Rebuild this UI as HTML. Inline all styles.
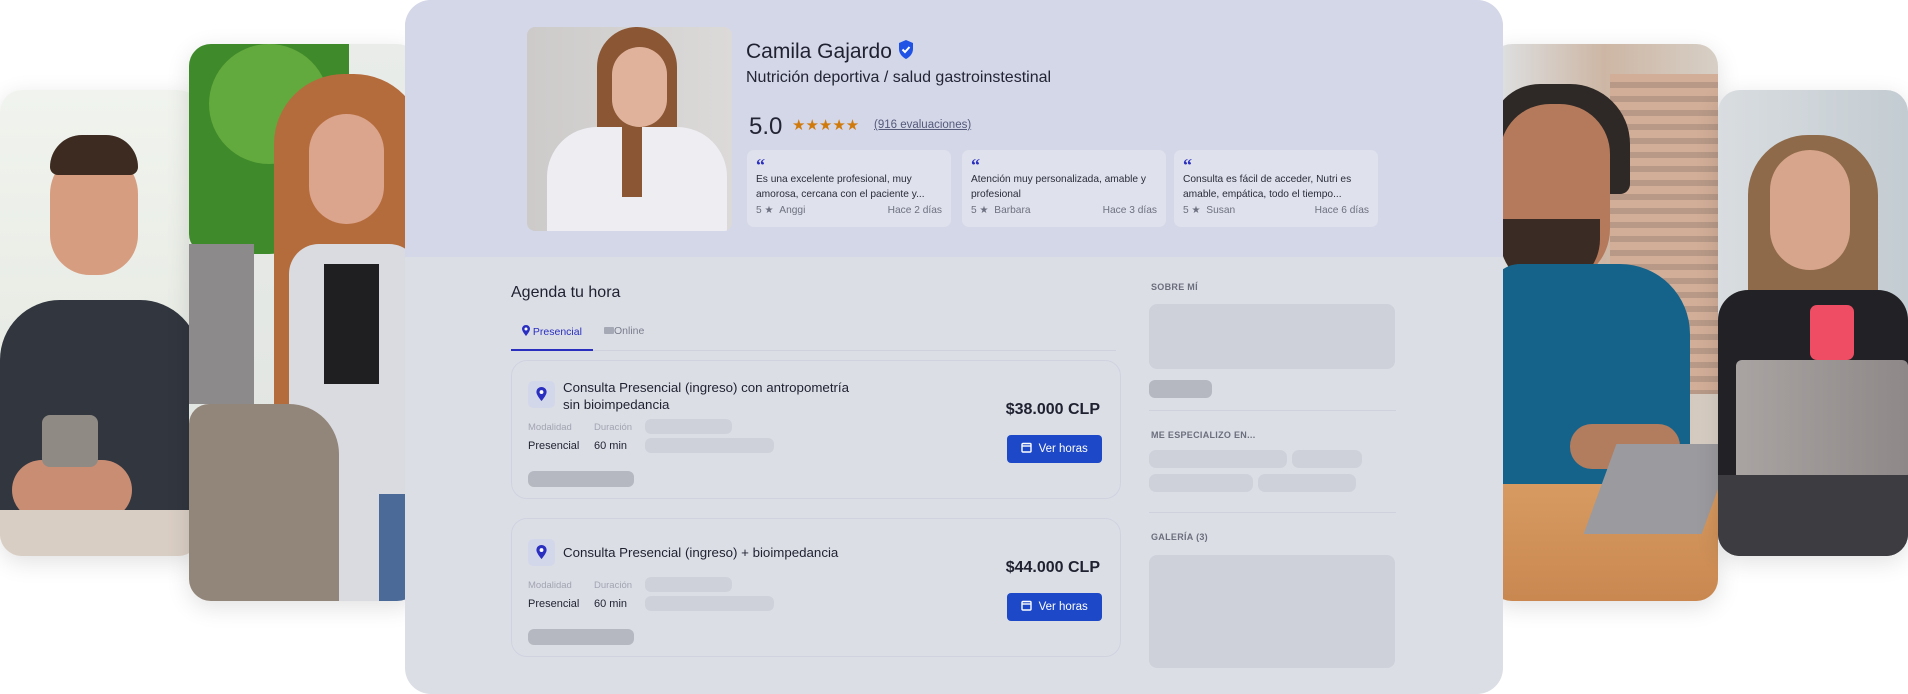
<!DOCTYPE html>
<html><head><meta charset="utf-8"><style>
*{margin:0;padding:0;box-sizing:border-box}
body{width:1908px;height:693px;background:#fff;position:relative;overflow:hidden;font-family:"Liberation Sans",sans-serif;color:#1f2130}
.ph{position:absolute;overflow:hidden;border-radius:22px;box-shadow:0 6px 24px rgba(0,0,0,.12)}
.ph div{position:absolute}
.card{position:absolute;left:405px;top:0;width:1098px;height:694px;background:#dcdee6;border-radius:26px;overflow:hidden}
.hd{position:absolute;left:0;top:0;width:100%;height:257px;background:#d4d7e8}
.a{position:absolute}
.rv{position:absolute;top:150px;width:204px;height:77px;background:#dfe1ec;border-radius:7px;font-size:10.2px;color:#2a2c3a}
.rv .q{position:absolute;left:9px;top:5px;color:#2a2fc0;font-size:18px;font-weight:bold;font-family:"Liberation Serif",serif}
.rv .t{position:absolute;left:9px;top:22px;width:190px;line-height:15px}
.rv .f{position:absolute;left:9px;right:9px;top:55px;color:#6d7080;font-size:10.2px}
.rv .f span{float:right}
.sk{position:absolute;background:#cfd1da;border-radius:6px}
.sk2{position:absolute;background:#b6b8c1;border-radius:6px}
.bx{position:absolute;left:106px;width:610px;height:139px;border:1.5px solid #d0d3df;border-radius:16px}
.ic{position:absolute;left:16px;top:20px;width:27px;height:27px;background:#d3d7ea;border-radius:5px}
.tt{position:absolute;left:51px;font-size:13.3px;line-height:17px;color:#1f2130}
.lb{position:absolute;font-size:9.5px;color:#a2a4b0}
.vl{position:absolute;font-size:11px;color:#1f2130}
.pr{position:absolute;right:20px;font-size:16px;font-weight:bold;color:#1f2130}
.bt{position:absolute;right:18px;width:95px;height:28px;background:#1d48c7;border-radius:4px;color:#fff;font-size:11.5px;line-height:28px;text-align:center}
.sh{position:absolute;font-size:9px;font-weight:bold;color:#6b6e7c;letter-spacing:.3px}
.dv{position:absolute;left:744px;width:247px;height:1px;background:#cfd2dc}
</style></head><body>

<div class="ph" style="left:0;top:90px;width:200px;height:466px;background:linear-gradient(#f1f4ee,#e7ebe4 60%,#d8cdc4)">
 <div style="left:0;top:210px;width:200px;height:220px;background:#31363f;border-radius:60px 60px 0 0"></div>
 <div style="left:50px;top:60px;width:88px;height:125px;background:#d79d80;border-radius:44px 44px 40px 40px"></div>
 <div style="left:50px;top:45px;width:88px;height:40px;background:#3d2b21;border-radius:40px 40px 10px 10px"></div>
 <div style="left:12px;top:370px;width:120px;height:60px;background:#c98d73;border-radius:30px"></div>
 <div style="left:42px;top:325px;width:56px;height:52px;background:#8f8a84;border-radius:8px"></div>
 <div style="left:0;top:420px;width:200px;height:50px;background:#d9cec4"></div>
</div>

<div class="ph" style="left:189px;top:44px;width:230px;height:557px;background:linear-gradient(#e9ece9,#dfe3df)">
 <div style="left:0;top:0;width:160px;height:210px;background:#3f8a2a;border-radius:0 0 80px 20px"></div>
 <div style="left:20px;top:0;width:120px;height:120px;background:#62a93e;border-radius:50%"></div>
 <div style="left:85px;top:30px;width:150px;height:400px;background:#b56c3c;border-radius:70px 70px 30px 30px"></div>
 <div style="left:120px;top:70px;width:75px;height:110px;background:#dba58d;border-radius:38px"></div>
 <div style="left:100px;top:200px;width:130px;height:370px;background:#d9dbe1;border-radius:30px 30px 0 0"></div>
 <div style="left:135px;top:220px;width:55px;height:120px;background:#1f1f22"></div>
 <div style="left:0;top:200px;width:65px;height:160px;background:#8d8a8c"></div>
 <div style="left:0;top:360px;width:150px;height:200px;background:#928579;border-radius:20px 50px 0 0"></div>
 <div style="left:190px;top:450px;width:40px;height:110px;background:#4c6a97"></div>
</div>

<div class="ph" style="left:1490px;top:44px;width:228px;height:557px;background:linear-gradient(90deg,#dfe3e6,#cdb6a4 50%,#d7cfc6)">
 <div style="left:120px;top:30px;width:108px;height:320px;background:repeating-linear-gradient(#d2ae98 0 8px,#b89988 8px 14px)"></div>
 <div style="left:0;top:40px;width:140px;height:110px;background:#2e2926;border-radius:50px 60px 10px 10px"></div>
 <div style="left:10px;top:60px;width:110px;height:180px;background:#b57a5c;border-radius:50px 50px 55px 55px"></div>
 <div style="left:10px;top:175px;width:100px;height:70px;background:#3a2c24;border-radius:0 0 50px 50px"></div>
 <div style="left:0;top:220px;width:200px;height:230px;background:#15638a;border-radius:30px 70px 0 0"></div>
 <div style="left:80px;top:380px;width:110px;height:45px;background:#b27c5e;border-radius:22px"></div>
 <div style="left:0;top:440px;width:228px;height:120px;background:linear-gradient(#d79b61,#c98750)"></div>
 <div style="left:110px;top:400px;width:118px;height:90px;background:#9b9a9e;transform:skewX(-20deg)"></div>
</div>

<div class="ph" style="left:1718px;top:90px;width:190px;height:466px;background:linear-gradient(90deg,#d9dde0,#c3ccd2)">
 <div style="left:30px;top:45px;width:130px;height:200px;background:#8e6a4a;border-radius:60px 60px 20px 20px"></div>
 <div style="left:52px;top:60px;width:80px;height:120px;background:#d7a58b;border-radius:40px"></div>
 <div style="left:0;top:200px;width:190px;height:266px;background:#222226;border-radius:30px 30px 0 0"></div>
 <div style="left:92px;top:215px;width:44px;height:55px;background:#ef4d63;border-radius:7px"></div>
 <div style="left:18px;top:270px;width:172px;height:120px;background:linear-gradient(90deg,#a9a3a2,#8e8888);border-radius:6px"></div>
 <div style="left:0;top:385px;width:190px;height:85px;background:#3c3c41"></div>
</div>

<div class="card">
 <div class="hd"></div>
 <div class="a" style="left:122px;top:27px;width:205px;height:204px;border-radius:8px;overflow:hidden;background:linear-gradient(90deg,#cdcaca,#dcd9d9)">
  <div class="a" style="left:70px;top:0;width:80px;height:200px;background:#8a5634;border-radius:40px 40px 10px 10px"></div>
  <div class="a" style="left:85px;top:20px;width:55px;height:80px;background:#e1b29b;border-radius:28px"></div>
  <div class="a" style="left:20px;top:100px;width:180px;height:110px;background:#eeeef2;border-radius:50px 50px 0 0"></div>
  <div class="a" style="left:95px;top:100px;width:20px;height:70px;background:#8a5634"></div>
 </div>
 <div class="a" style="left:341px;top:40px;font-size:21px;font-weight:500">Camila Gajardo <svg width="16" height="19" viewBox="0 0 16 19" style="vertical-align:-1px"><path d="M8 0L15 3V9C15 14 11 17.5 8 19C5 17.5 1 14 1 9V3Z" fill="#2152e6"/><path d="M4.5 9.5L7 12L11.5 7" stroke="#fff" stroke-width="2" fill="none"/></svg></div>
 <div class="a" style="left:341px;top:69px;font-size:16px;color:#232535">Nutrición deportiva / salud gastroinstestinal</div>
 <div class="a" style="left:344px;top:113px;font-size:24px;color:#232535">5.0</div>
 <div class="a" style="left:387px;top:116px;font-size:15px;color:#d07a0c">★★★★★</div>
 <div class="a" style="left:469px;top:119px;font-size:11.5px;color:#555a7a;text-decoration:underline">(916 evaluaciones)</div>

 <div class="rv" style="left:342px"><div class="q">“</div><div class="t">Es una excelente profesional, muy amorosa, cercana con el paciente y...</div><div class="f">5 ★ &nbsp;Anggi<span>Hace 2 días</span></div></div>
 <div class="rv" style="left:557px"><div class="q">“</div><div class="t">Atención muy personalizada, amable y profesional</div><div class="f">5 ★ &nbsp;Barbara<span>Hace 3 días</span></div></div>
 <div class="rv" style="left:769px"><div class="q">“</div><div class="t">Consulta es fácil de acceder, Nutri es amable, empática, todo el tiempo...</div><div class="f">5 ★ &nbsp;Susan<span>Hace 6 días</span></div></div>

 <div class="a" style="left:106px;top:284px;font-size:16px">Agenda tu hora</div>
 <div class="a" style="left:117px;top:325px;font-size:10.5px;color:#2a2fc0"><svg width="8" height="11" viewBox="0 0 8 11" style="vertical-align:-1px"><path d="M4 0C6.2 0 8 1.7 8 3.9 8 6.5 4 11 4 11S0 6.5 0 3.9C0 1.7 1.8 0 4 0Z" fill="#2a2fc0"/><circle cx="4" cy="4" r="1.5" fill="#fff"/></svg> Presencial</div>
 <div class="a" style="left:199px;top:325px;font-size:10.5px;color:#7a7d8c"><span style="display:inline-block;width:10px;height:7px;background:#a5a8b5;border-radius:1px"></span>Online</div>
 <div class="a" style="left:106px;top:350px;width:605px;height:1px;background:#cfd2dc"></div>
 <div class="a" style="left:106px;top:349px;width:82px;height:2px;background:#2a2fc0"></div>

 <div class="bx" style="top:360px">
  <div class="ic"><svg style="position:absolute;left:8px;top:6px" width="11" height="14" viewBox="0 0 8 11"><path d="M4 0C6.2 0 8 1.7 8 3.9 8 6.5 4 11 4 11S0 6.5 0 3.9C0 1.7 1.8 0 4 0Z" fill="#2a2fc0"/><circle cx="4" cy="4" r="1.5" fill="#fff"/></svg></div>
  <div class="tt" style="top:18px">Consulta Presencial (ingreso) con antropometría<br>sin bioimpedancia</div>
  <div class="lb" style="left:16px;top:61px">Modalidad</div><div class="lb" style="left:82px;top:61px">Duración</div>
  <div class="vl" style="left:16px;top:79px">Presencial</div><div class="vl" style="left:82px;top:79px">60 min</div>
  <div class="sk" style="left:133px;top:58px;width:87px;height:15px"></div>
  <div class="sk" style="left:133px;top:77px;width:129px;height:15px"></div>
  <div class="sk2" style="left:16px;top:110px;width:106px;height:16px"></div>
  <div class="pr" style="top:40px">$38.000 CLP</div>
  <div class="bt" style="top:74px"><svg width="11" height="11" viewBox="0 0 11 11" style="vertical-align:-1px"><rect x="1" y="1.5" width="9" height="8.5" rx="1" fill="none" stroke="#fff" stroke-width="1.4"/><path d="M1 4H10" stroke="#fff" stroke-width="1.4"/></svg>&nbsp; Ver horas</div>
 </div>
 <div class="bx" style="top:518px">
  <div class="ic"><svg style="position:absolute;left:8px;top:6px" width="11" height="14" viewBox="0 0 8 11"><path d="M4 0C6.2 0 8 1.7 8 3.9 8 6.5 4 11 4 11S0 6.5 0 3.9C0 1.7 1.8 0 4 0Z" fill="#2a2fc0"/><circle cx="4" cy="4" r="1.5" fill="#fff"/></svg></div>
  <div class="tt" style="top:25px">Consulta Presencial (ingreso) + bioimpedancia</div>
  <div class="lb" style="left:16px;top:61px">Modalidad</div><div class="lb" style="left:82px;top:61px">Duración</div>
  <div class="vl" style="left:16px;top:79px">Presencial</div><div class="vl" style="left:82px;top:79px">60 min</div>
  <div class="sk" style="left:133px;top:58px;width:87px;height:15px"></div>
  <div class="sk" style="left:133px;top:77px;width:129px;height:15px"></div>
  <div class="sk2" style="left:16px;top:110px;width:106px;height:16px"></div>
  <div class="pr" style="top:40px">$44.000 CLP</div>
  <div class="bt" style="top:74px"><svg width="11" height="11" viewBox="0 0 11 11" style="vertical-align:-1px"><rect x="1" y="1.5" width="9" height="8.5" rx="1" fill="none" stroke="#fff" stroke-width="1.4"/><path d="M1 4H10" stroke="#fff" stroke-width="1.4"/></svg>&nbsp; Ver horas</div>
 </div>

 <div class="sh" style="left:746px;top:282px">SOBRE MÍ</div>
 <div class="sk" style="left:744px;top:304px;width:246px;height:65px;border-radius:8px"></div>
 <div class="sk2" style="left:744px;top:380px;width:63px;height:18px"></div>
 <div class="dv" style="top:410px"></div>
 <div class="sh" style="left:746px;top:430px">ME ESPECIALIZO EN...</div>
 <div class="sk" style="left:744px;top:450px;width:138px;height:18px;border-radius:7px"></div>
 <div class="sk" style="left:887px;top:450px;width:70px;height:18px;border-radius:7px"></div>
 <div class="sk" style="left:744px;top:474px;width:104px;height:18px;border-radius:7px"></div>
 <div class="sk" style="left:853px;top:474px;width:98px;height:18px;border-radius:7px"></div>
 <div class="dv" style="top:512px"></div>
 <div class="sh" style="left:746px;top:532px">GALERÍA (3)</div>
 <div class="sk" style="left:744px;top:555px;width:246px;height:113px;border-radius:8px"></div>
</div>
</body></html>
